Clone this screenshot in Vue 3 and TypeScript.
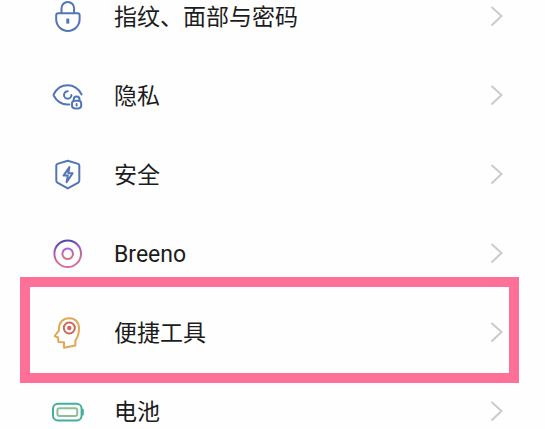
<script setup lang="ts">
type IconName = 'lock' | 'privacy' | 'shield' | 'breeno' | 'tools' | 'battery'

interface SettingItem {
  icon: IconName
  label: string
  highlighted?: boolean
}

const items: SettingItem[] = [
  { icon: 'lock', label: '指纹、面部与密码' },
  { icon: 'privacy', label: '隐私' },
  { icon: 'shield', label: '安全' },
  { icon: 'breeno', label: 'Breeno' },
  { icon: 'tools', label: '便捷工具', highlighted: true },
  { icon: 'battery', label: '电池' },
]
</script>

<template>
  <main class="settings">
    <ul class="list">
      <li
        v-for="item in items"
        :key="item.icon"
        class="item"
        :class="{ highlighted: item.highlighted }"
      >
        <a class="row" href="#">
          <svg class="icon" :class="item.icon" viewBox="0 0 32 33" aria-hidden="true">
            <g v-if="item.icon === 'lock'">
              <path d="M9.5 13V8.200a6.300 6.300 0 0 1 12.600 0V13" />
              <path d="M6.200 13.300h19.400q2 0 2 2v4a11.700 11.700 0 0 1-23.400 0v-4q0-2 2-2z" />
              <path class="heavy" d="M15.800 18.600v5" />
            </g>
            <g v-else-if="item.icon === 'privacy'">
              <path d="M29.600 15.400C26.400 9.500 21.500 6.300 15.700 6.300 9.800 6.300 4.600 9.800 1.800 15.200q-.4.8 0 1.600c2.800 5.300 7.800 8.700 13.900 8.700h1.600" />
              <path d="M15.700 12.300a3.700 3.700 0 1 0 3.700 3.700" />
              <path d="M21.700 22v-1.500a2.900 2.900 0 0 1 5.800 0V22" />
              <rect x="20" y="21.800" width="9.200" height="7.600" rx="2.800" />
              <path d="M24.600 25v1.400" />
            </g>
            <g v-else-if="item.icon === 'shield'">
              <path d="M15.800 2.700 26.200 5.900q1.100.4 1.100 1.500v15.200q0 1.300-1 2L15.800 30.400 5.400 24.600q-1.100-.7-1.100-2V7.400q0-1.100 1.100-1.500z" />
              <path class="bolt" d="M17.400 9 11.600 17.600H15.800L14.600 24.200 20.600 15.200H16.300z" />
            </g>
            <g v-else-if="item.icon === 'breeno'">
              <defs>
                <linearGradient id="breeno-outer" x1="0.4" y1="0" x2="0.6" y2="1">
                  <stop offset="0" stop-color="#5145a5" />
                  <stop offset="0.35" stop-color="#a35bc4" />
                  <stop offset="0.7" stop-color="#d0708c" />
                  <stop offset="1" stop-color="#d96bac" />
                </linearGradient>
                <linearGradient id="breeno-inner" x1="0" y1="0" x2="0" y2="1">
                  <stop offset="0" stop-color="#b05fd0" />
                  <stop offset="1" stop-color="#d27a80" />
                </linearGradient>
              </defs>
              <circle cx="15.700" cy="16.700" r="13.300" stroke="url(#breeno-outer)" />
              <circle cx="15.700" cy="16.700" r="5.300" stroke="url(#breeno-inner)" />
            </g>
            <g v-else-if="item.icon === 'tools'">
              <path d="M12 31.700 23.400 29.500V24.500C25.500 21.500 27 18.500 27 12.800 27 6.200 23.200 2.200 17.300 2.200 11.200 2.200 7 6.200 7 12.400V14.400L2.700 20 5.900 21.500 6.500 26 12 26.300z" />
              <circle class="target" cx="17.300" cy="12" r="5.500" />
              <circle class="target" cx="17.300" cy="12" r="1.200" />
            </g>
            <g v-else>
              <rect x="1" y="8.800" width="28.600" height="16.600" rx="5" />
              <rect class="charge" x="5.400" y="13.200" width="19.800" height="7.800" rx="2" />
              <path d="M30.800 14.800v4.600" />
            </g>
          </svg>
          <span class="label">{{ item.label }}</span>
          <svg class="chevron" viewBox="0 0 13 21" aria-hidden="true">
            <path d="M1.500 1 11.500 10 1.500 19.500" />
          </svg>
        </a>
      </li>
    </ul>
  </main>
</template>

<style>
body {
  margin: 0;
  background: #fefefe;
}
</style>

<style scoped>
.settings {
  height: 100vh;
  overflow: hidden;
  font-family: Roboto, "Noto Sans CJK SC", sans-serif;
  color: #1c1c1c;
}

.list {
  margin: -23px 0 0;
  padding: 0;
  list-style: none;
}

.item {
  position: relative;
}

.row {
  display: flex;
  align-items: center;
  height: 79px;
  padding: 0 42px 0 52px;
  color: inherit;
  text-decoration: none;
}

.highlighted::after {
  content: "";
  position: absolute;
  inset: -16px 26px -11px 20px;
  border: 10px solid #ff7099;
  pointer-events: none;
}

.icon {
  flex: none;
  width: 32px;
  height: 33px;
  fill: none;
  stroke: #5275b8;
  stroke-width: 2;
  stroke-linecap: round;
  stroke-linejoin: round;
}

.heavy {
  stroke-width: 3;
  stroke-linecap: butt;
}

.tools {
  stroke: #e3a655;
}

.target {
  stroke: #c9685a;
}

.battery {
  stroke: #42ae9b;
}

.charge {
  stroke: #8cbf96;
}

.label {
  flex: 1;
  margin-left: 30px;
  padding-top: 2px;
  font-size: 23px;
  line-height: 32px;
}

.chevron {
  flex: none;
  width: 13px;
  height: 21px;
  fill: none;
  stroke: #cbcbcb;
  stroke-width: 2;
}
</style>
